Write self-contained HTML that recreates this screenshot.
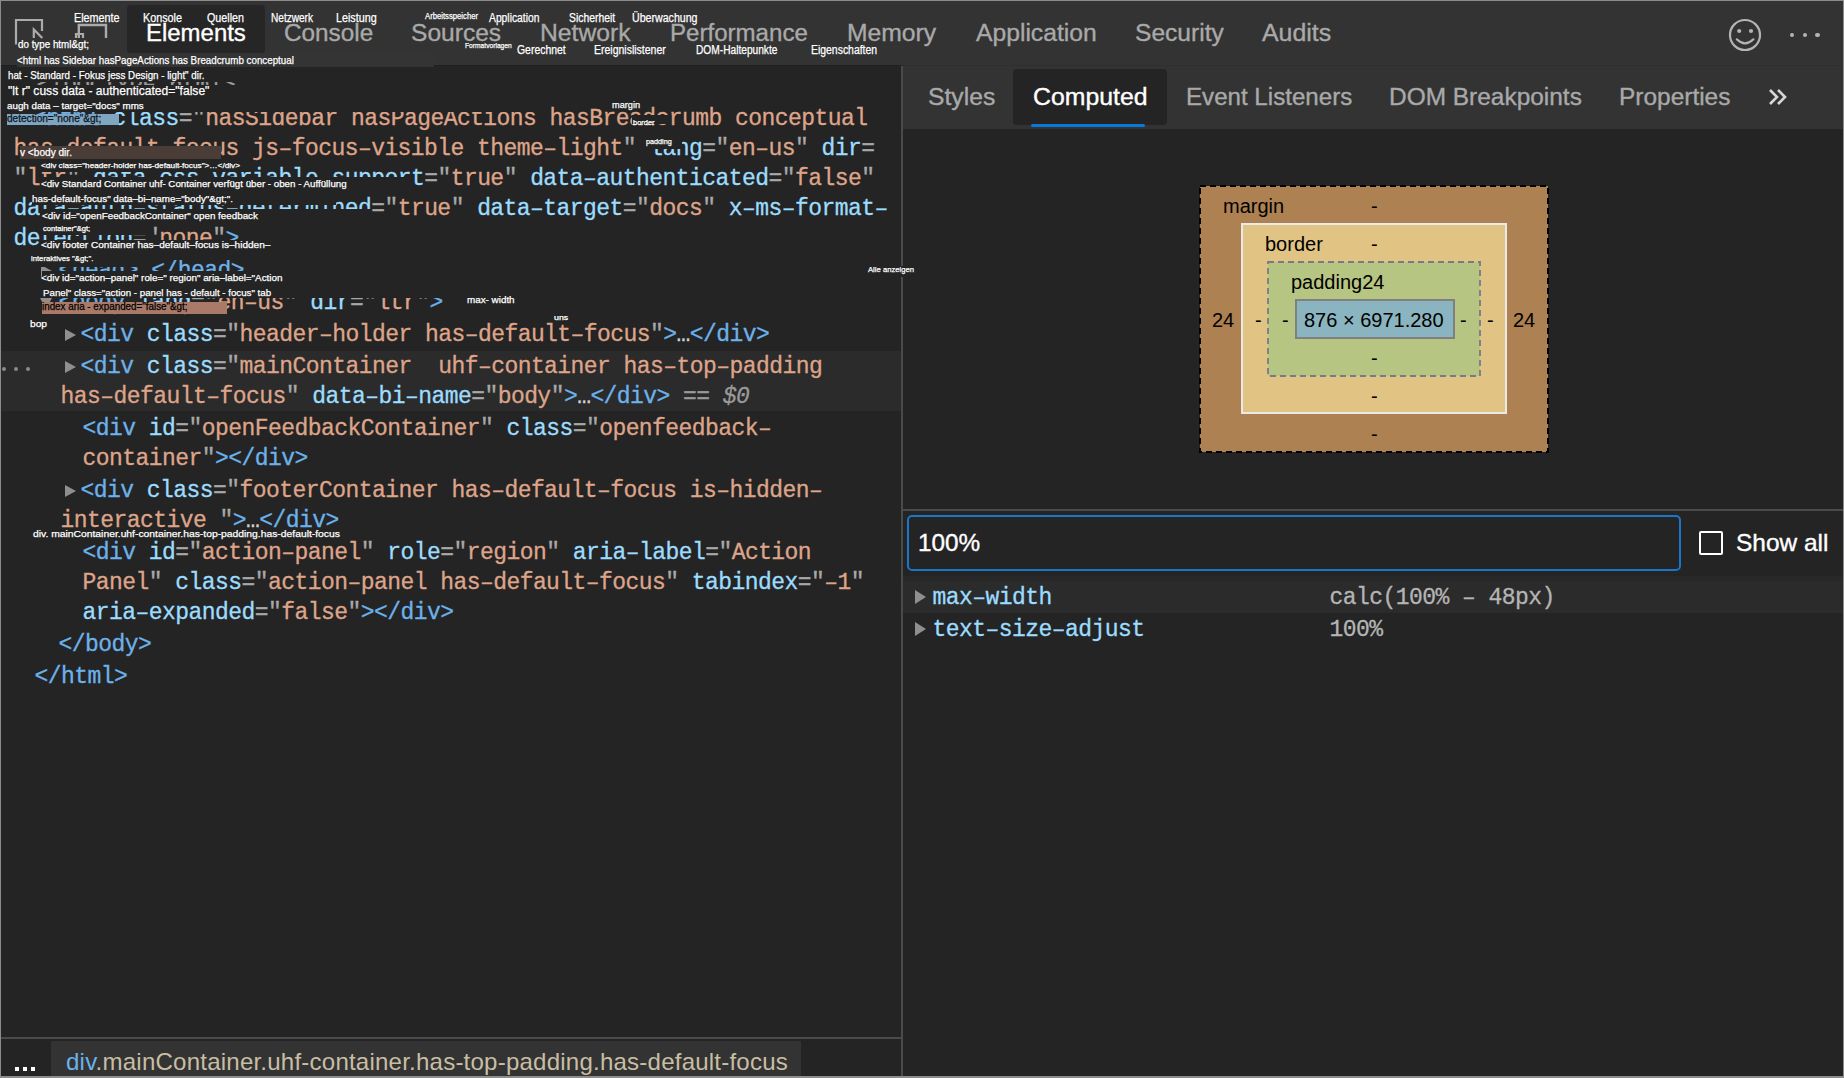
<!DOCTYPE html><html><head><meta charset="utf-8"><style>
*{margin:0;padding:0}
html,body{width:1844px;height:1078px;overflow:hidden;background:#242424}
body>div,body>svg{position:absolute}
.t{white-space:pre}
.tg{color:#6cb2ea;-webkit-text-stroke:0.3px #6cb2ea}.an{color:#9cdcfe;-webkit-text-stroke:0.3px #9cdcfe}.av{color:#dea48a;-webkit-text-stroke:0.3px #dea48a}.pu{color:#a8a8a8;-webkit-text-stroke:0.3px #a8a8a8}.tx{color:#d4d4d4;-webkit-text-stroke:0.3px #d4d4d4}.gr{color:#9a9a9a;-webkit-text-stroke:0.3px #9a9a9a}.gi{color:#9a9a9a;font-style:italic;-webkit-text-stroke:0.3px #9a9a9a}.vl{color:#b4b4b4;-webkit-text-stroke:0.3px #b4b4b4}
</style></head><body>
<div style="left:0px;top:0px;width:1844px;height:1078px;background:#242424;"></div>
<div style="left:0px;top:0px;width:1844px;height:65px;background:#333333;"></div>
<div style="left:0px;top:65px;width:901px;height:1px;background:#1f1f1f;"></div>
<div style="left:903px;top:65px;width:941px;height:64px;background:#333333;"></div>
<div style="left:903px;top:65px;width:941px;height:1px;background:#2f2f2f;"></div>
<div style="left:127px;top:5px;width:138px;height:48px;background:#262626;border-radius:4px"></div>
<div class="t" style="left:146.00px;top:21px;font:24px/24px 'Liberation Sans';color:#ffffff;-webkit-text-stroke:0.35px #ffffff;transform:scale(0.9980,1.03);transform-origin:0 20px">Elements</div>
<div class="t" style="left:283.69px;top:21px;font:24px/24px 'Liberation Sans';color:#a9a9a9;-webkit-text-stroke:0.35px #a9a9a9;transform:scale(1.0128,1.03);transform-origin:0 20px">Console</div>
<div class="t" style="left:410.98px;top:21px;font:24px/24px 'Liberation Sans';color:#a9a9a9;-webkit-text-stroke:0.35px #a9a9a9;transform:scale(1.0233,1.03);transform-origin:0 20px">Sources</div>
<div class="t" style="left:540.17px;top:21px;font:24px/24px 'Liberation Sans';color:#a9a9a9;-webkit-text-stroke:0.35px #a9a9a9;transform:scale(1.0279,1.03);transform-origin:0 20px">Network</div>
<div class="t" style="left:670.20px;top:21px;font:24px/24px 'Liberation Sans';color:#a9a9a9;-webkit-text-stroke:0.35px #a9a9a9;transform:scale(1.0030,1.03);transform-origin:0 20px">Performance</div>
<div class="t" style="left:847.37px;top:21px;font:24px/24px 'Liberation Sans';color:#a9a9a9;-webkit-text-stroke:0.35px #a9a9a9;transform:scale(1.0282,1.03);transform-origin:0 20px">Memory</div>
<div class="t" style="left:976.40px;top:21px;font:24px/24px 'Liberation Sans';color:#a9a9a9;-webkit-text-stroke:0.35px #a9a9a9;transform:scale(1.0279,1.03);transform-origin:0 20px">Application</div>
<div class="t" style="left:1134.78px;top:21px;font:24px/24px 'Liberation Sans';color:#a9a9a9;-webkit-text-stroke:0.35px #a9a9a9;transform:scale(1.0235,1.03);transform-origin:0 20px">Security</div>
<div class="t" style="left:1261.80px;top:21px;font:24px/24px 'Liberation Sans';color:#a9a9a9;-webkit-text-stroke:0.35px #a9a9a9;transform:scale(1.0369,1.03);transform-origin:0 20px">Audits</div>
<svg style="left:0px;top:0px" width="120" height="60" viewBox="0 0 120 60"><path d="M16 44.5 V20 H42 V31" fill="none" stroke="#ababab" stroke-width="2.2"/><path d="M33.8 38 V29.5 L42.3 38" fill="none" stroke="#ababab" stroke-width="2.2"/><path d="M78.8 38 V25 H106 V38" fill="none" stroke="#ababab" stroke-width="2.4"/><path d="M76 38 V34 H83 V38" fill="none" stroke="#ababab" stroke-width="2.2"/></svg>
<svg style="left:1727px;top:17px" width="36" height="36" viewBox="0 0 36 36"><circle cx="18" cy="18" r="15" fill="none" stroke="#b4b4b4" stroke-width="2.2"/><circle cx="12.2" cy="14" r="2.1" fill="#b4b4b4"/><circle cx="24" cy="14" r="2.1" fill="#b4b4b4"/><path d="M9.8 22.3 Q18 30.5 26.4 22.3" fill="none" stroke="#b4b4b4" stroke-width="2.2" stroke-linecap="round"/></svg>
<div style="left:1790.0px;top:33px;width:4.4px;height:4.4px;border-radius:2.2px;background:#b4b4b4"></div>
<div style="left:1802.7px;top:33px;width:4.4px;height:4.4px;border-radius:2.2px;background:#b4b4b4"></div>
<div style="left:1815.4px;top:33px;width:4.4px;height:4.4px;border-radius:2.2px;background:#b4b4b4"></div>
<div style="left:1013px;top:69px;width:154px;height:56px;background:#242424;border-radius:4px"></div>
<div style="left:1031px;top:124px;width:114px;height:3px;background:#0a78d6;border-radius:2px"></div>
<div class="t" style="left:927.97px;top:85px;font:24px/24px 'Liberation Sans';color:#a9a9a9;-webkit-text-stroke:0.35px #a9a9a9;transform:scale(1.0286,1.03);transform-origin:0 20px">Styles</div>
<div class="t" style="left:1032.96px;top:85px;font:24px/24px 'Liberation Sans';color:#ffffff;-webkit-text-stroke:0.35px #ffffff;transform:scale(1.0352,1.03);transform-origin:0 20px">Computed</div>
<div class="t" style="left:1186.00px;top:85px;font:24px/24px 'Liberation Sans';color:#a9a9a9;-webkit-text-stroke:0.35px #a9a9a9;transform:scale(1.0049,1.03);transform-origin:0 20px">Event Listeners</div>
<div class="t" style="left:1388.78px;top:85px;font:24px/24px 'Liberation Sans';color:#a9a9a9;-webkit-text-stroke:0.35px #a9a9a9;transform:scale(1.0182,1.03);transform-origin:0 20px">DOM Breakpoints</div>
<div class="t" style="left:1618.78px;top:85px;font:24px/24px 'Liberation Sans';color:#a9a9a9;-webkit-text-stroke:0.35px #a9a9a9;transform:scale(1.0187,1.03);transform-origin:0 20px">Properties</div>
<svg style="left:1767px;top:87px" width="22" height="20" viewBox="0 0 22 20"><path d="M3 3 L10 10 L3 17 M11 3 L18 10 L11 17" fill="none" stroke="#d8d8d8" stroke-width="2.6"/></svg>
<div style="left:901px;top:66px;width:2px;height:1012px;background:#4a4a4a;"></div>
<div style="left:1px;top:351px;width:900px;height:60px;background:#2b2b2b;"></div>
<div style="left:2px;top:367px;width:4px;height:4px;border-radius:2px;background:#8a8a8a"></div>
<div style="left:14px;top:367px;width:4px;height:4px;border-radius:2px;background:#8a8a8a"></div>
<div style="left:26px;top:367px;width:4px;height:4px;border-radius:2px;background:#8a8a8a"></div>
<div class="t" style="left:36.6px;top:76px;font:23px/23px 'Liberation Mono';letter-spacing:-0.56px;"><span class="gr">&lt;!DOCTYPE html&gt;</span></div>
<svg style="left:17px;top:114px" width="12" height="11" viewBox="0 0 12 11"><path d="M0 0 L12 0 L6 11 Z" fill="#8f8f8f"/></svg>
<div class="t" style="left:33.1px;top:108px;font:23px/23px 'Liberation Mono';letter-spacing:-0.56px;"><span class="tg">&lt;html</span><span class="tx"> </span><span class="an">class</span><span class="pu">="</span><span class="av">hasSidebar hasPageActions hasBreadcrumb conceptual</span></div>
<div class="t" style="left:13.6px;top:138px;font:23px/23px 'Liberation Mono';letter-spacing:-0.56px;"><span class="av">has–default–focus js–focus–visible theme–light</span><span class="pu">"</span><span class="tx"> </span><span class="an">lang</span><span class="pu">="</span><span class="av">en–us</span><span class="pu">"</span><span class="tx"> </span><span class="an">dir</span><span class="pu">=</span></div>
<div class="t" style="left:13.6px;top:168px;font:23px/23px 'Liberation Mono';letter-spacing:-0.56px;"><span class="pu">"</span><span class="av">ltr</span><span class="pu">"</span><span class="tx"> </span><span class="an">data–css–variable–support</span><span class="pu">="</span><span class="av">true</span><span class="pu">"</span><span class="tx"> </span><span class="an">data–authenticated</span><span class="pu">="</span><span class="av">false</span><span class="pu">"</span></div>
<div class="t" style="left:13.6px;top:198px;font:23px/23px 'Liberation Mono';letter-spacing:-0.56px;"><span class="an">data–auth–status–determined</span><span class="pu">="</span><span class="av">true</span><span class="pu">"</span><span class="tx"> </span><span class="an">data–target</span><span class="pu">="</span><span class="av">docs</span><span class="pu">"</span><span class="tx"> </span><span class="an">x–ms–format–</span></div>
<div class="t" style="left:13.6px;top:228px;font:23px/23px 'Liberation Mono';letter-spacing:-0.56px;"><span class="an">detection</span><span class="pu">="</span><span class="av">none</span><span class="pu">"</span><span class="tg">&gt;</span></div>
<svg style="left:41px;top:265px" width="11" height="12" viewBox="0 0 11 12"><path d="M0 0 L11 6 L0 12 Z" fill="#8f8f8f"/></svg>
<div class="t" style="left:58.6px;top:260px;font:23px/23px 'Liberation Mono';letter-spacing:-0.56px;"><span class="tg">&lt;head&gt;</span><span class="tx">…</span><span class="tg">&lt;/head&gt;</span></div>
<svg style="left:40px;top:298px" width="12" height="11" viewBox="0 0 12 11"><path d="M0 0 L12 0 L6 11 Z" fill="#8f8f8f"/></svg>
<div class="t" style="left:58.6px;top:292px;font:23px/23px 'Liberation Mono';letter-spacing:-0.56px;"><span class="tg">&lt;body</span><span class="tx"> </span><span class="an">lang</span><span class="pu">="</span><span class="av">en–us</span><span class="pu">"</span><span class="tx"> </span><span class="an">dir</span><span class="pu">="</span><span class="av">ltr</span><span class="pu">"</span><span class="tg">&gt;</span></div>
<svg style="left:65px;top:329px" width="11" height="12" viewBox="0 0 11 12"><path d="M0 0 L11 6 L0 12 Z" fill="#8f8f8f"/></svg>
<div class="t" style="left:80.6px;top:324px;font:23px/23px 'Liberation Mono';letter-spacing:-0.56px;"><span class="tg">&lt;div</span><span class="tx"> </span><span class="an">class</span><span class="pu">="</span><span class="av">header–holder has–default–focus</span><span class="pu">"</span><span class="tg">&gt;</span><span class="tx">…</span><span class="tg">&lt;/div&gt;</span></div>
<svg style="left:65px;top:361px" width="11" height="12" viewBox="0 0 11 12"><path d="M0 0 L11 6 L0 12 Z" fill="#8f8f8f"/></svg>
<div class="t" style="left:80.6px;top:356px;font:23px/23px 'Liberation Mono';letter-spacing:-0.56px;"><span class="tg">&lt;div</span><span class="tx"> </span><span class="an">class</span><span class="pu">="</span><span class="av">mainContainer  uhf–container has–top–padding</span></div>
<div class="t" style="left:60.6px;top:386px;font:23px/23px 'Liberation Mono';letter-spacing:-0.56px;"><span class="av">has–default–focus</span><span class="pu">"</span><span class="tx"> </span><span class="an">data–bi–name</span><span class="pu">="</span><span class="av">body</span><span class="pu">"</span><span class="tg">&gt;</span><span class="tx">…</span><span class="tg">&lt;/div&gt;</span><span class="gr"> == </span><span class="gi">$0</span></div>
<div class="t" style="left:82.6px;top:418px;font:23px/23px 'Liberation Mono';letter-spacing:-0.56px;"><span class="tg">&lt;div</span><span class="tx"> </span><span class="an">id</span><span class="pu">="</span><span class="av">openFeedbackContainer</span><span class="pu">"</span><span class="tx"> </span><span class="an">class</span><span class="pu">="</span><span class="av">openfeedback–</span></div>
<div class="t" style="left:82.6px;top:448px;font:23px/23px 'Liberation Mono';letter-spacing:-0.56px;"><span class="av">container</span><span class="pu">"</span><span class="tg">&gt;&lt;/div&gt;</span></div>
<svg style="left:65px;top:485px" width="11" height="12" viewBox="0 0 11 12"><path d="M0 0 L11 6 L0 12 Z" fill="#8f8f8f"/></svg>
<div class="t" style="left:80.6px;top:480px;font:23px/23px 'Liberation Mono';letter-spacing:-0.56px;"><span class="tg">&lt;div</span><span class="tx"> </span><span class="an">class</span><span class="pu">="</span><span class="av">footerContainer has–default–focus is–hidden–</span></div>
<div class="t" style="left:60.6px;top:510px;font:23px/23px 'Liberation Mono';letter-spacing:-0.56px;"><span class="av">interactive </span><span class="pu">"</span><span class="tg">&gt;</span><span class="tx">…</span><span class="tg">&lt;/div&gt;</span></div>
<div class="t" style="left:82.6px;top:542px;font:23px/23px 'Liberation Mono';letter-spacing:-0.56px;"><span class="tg">&lt;div</span><span class="tx"> </span><span class="an">id</span><span class="pu">="</span><span class="av">action–panel</span><span class="pu">"</span><span class="tx"> </span><span class="an">role</span><span class="pu">="</span><span class="av">region</span><span class="pu">"</span><span class="tx"> </span><span class="an">aria–label</span><span class="pu">="</span><span class="av">Action</span></div>
<div class="t" style="left:82.6px;top:572px;font:23px/23px 'Liberation Mono';letter-spacing:-0.56px;"><span class="av">Panel</span><span class="pu">"</span><span class="tx"> </span><span class="an">class</span><span class="pu">="</span><span class="av">action–panel has–default–focus</span><span class="pu">"</span><span class="tx"> </span><span class="an">tabindex</span><span class="pu">="</span><span class="av">–1</span><span class="pu">"</span></div>
<div class="t" style="left:82.6px;top:602px;font:23px/23px 'Liberation Mono';letter-spacing:-0.56px;"><span class="an">aria–expanded</span><span class="pu">="</span><span class="av">false</span><span class="pu">"</span><span class="tg">&gt;&lt;/div&gt;</span></div>
<div class="t" style="left:58.6px;top:634px;font:23px/23px 'Liberation Mono';letter-spacing:-0.56px;"><span class="tg">&lt;/body&gt;</span></div>
<div class="t" style="left:34.6px;top:666px;font:23px/23px 'Liberation Mono';letter-spacing:-0.56px;"><span class="tg">&lt;/html&gt;</span></div>
<div style="left:1px;top:1037px;width:900px;height:2px;background:#4a4a4a;"></div>
<div style="left:51px;top:1041px;width:750px;height:36px;background:#333333;"></div>
<div style="left:15px;top:1067px;width:4px;height:4px;background:#ffffff;"></div>
<div style="left:23px;top:1067px;width:4px;height:4px;background:#ffffff;"></div>
<div style="left:31px;top:1067px;width:4px;height:4px;background:#ffffff;"></div>
<div class="t" style="left:65.6px;top:1050px;font:24px/24px 'Liberation Sans';letter-spacing:0.2px;transform:scaleX(1.0033);transform-origin:0 0"><span style="color:#6cb2ea">div</span><span style="color:#c8bea4">.mainContainer.uhf-container.has-top-padding.has-default-focus</span></div>
<svg style="left:1199px;top:185px" width="350" height="268"><rect x="1" y="1" width="348" height="266" fill="#ae8152" stroke="#000" stroke-width="2" stroke-dasharray="6 4"/></svg>
<div style="left:1241px;top:223px;width:266px;height:191px;box-sizing:border-box;border:2px solid #eaeaea;background:#e1c383"></div>
<svg style="left:1267px;top:261px" width="214" height="116"><rect x="1" y="1" width="212" height="114" fill="#b7c583" stroke="#777a88" stroke-width="1.8" stroke-dasharray="6 4"/></svg>
<div style="left:1295px;top:299px;width:160px;height:40px;box-sizing:border-box;border:2px solid #808080;background:#8ab4bf"></div>
<div class="t" style="left:1223px;top:196px;font:20px/20px 'Liberation Sans';color:#000000;">margin</div>
<div class="t" style="left:1371px;top:196px;font:20px/20px 'Liberation Sans';color:#000000;">-</div>
<div class="t" style="left:1265px;top:234px;font:20px/20px 'Liberation Sans';color:#000000;">border</div>
<div class="t" style="left:1371px;top:234px;font:20px/20px 'Liberation Sans';color:#000000;">-</div>
<div class="t" style="left:1291px;top:272px;font:20px/20px 'Liberation Sans';color:#000000;">padding24</div>
<div class="t" style="left:1304px;top:310px;font:20px/20px 'Liberation Sans';color:#000000;">876 × 6971.280</div>
<div class="t" style="left:1212px;top:310px;font:20px/20px 'Liberation Sans';color:#000000;">24</div>
<div class="t" style="left:1513px;top:310px;font:20px/20px 'Liberation Sans';color:#000000;">24</div>
<div class="t" style="left:1255px;top:310px;font:20px/20px 'Liberation Sans';color:#000000;">-</div>
<div class="t" style="left:1282px;top:310px;font:20px/20px 'Liberation Sans';color:#000000;">-</div>
<div class="t" style="left:1460px;top:310px;font:20px/20px 'Liberation Sans';color:#000000;">-</div>
<div class="t" style="left:1487px;top:310px;font:20px/20px 'Liberation Sans';color:#000000;">-</div>
<div class="t" style="left:1371px;top:348px;font:20px/20px 'Liberation Sans';color:#000000;">-</div>
<div class="t" style="left:1371px;top:386px;font:20px/20px 'Liberation Sans';color:#000000;">-</div>
<div class="t" style="left:1371px;top:424px;font:20px/20px 'Liberation Sans';color:#000000;">-</div>
<div style="left:903px;top:509px;width:940px;height:2px;background:#4a4a4a;"></div>
<div style="left:907px;top:515px;width:774px;height:56px;box-sizing:border-box;border:2px solid #1a76c9;border-radius:5px;background:#242424"></div>
<div class="t" style="left:917.98px;top:531px;font:24px/24px 'Liberation Sans';color:#ffffff;-webkit-text-stroke:0.35px #ffffff;transform:scale(1.0137,1.0);transform-origin:0 20px">100%</div>
<div style="left:1699px;top:531px;width:24px;height:24px;box-sizing:border-box;border:2px solid #ffffff;border-radius:2px"></div>
<div class="t" style="left:1735.58px;top:531px;font:24px/24px 'Liberation Sans';color:#ffffff;-webkit-text-stroke:0.35px #ffffff;transform:scale(1.0182,1.0);transform-origin:0 20px">Show all</div>
<div style="left:903px;top:576px;width:940px;height:5px;background:#282828;"></div>
<div style="left:903px;top:581px;width:940px;height:32px;background:#2b2b2b;"></div>
<svg style="left:915px;top:590px" width="11" height="14" viewBox="0 0 11 14"><path d="M0 0 L11 7 L0 14 Z" fill="#8f8f8f"/></svg>
<svg style="left:915px;top:622px" width="11" height="14" viewBox="0 0 11 14"><path d="M0 0 L11 7 L0 14 Z" fill="#8f8f8f"/></svg>
<div class="t" style="left:932.6px;top:587px;font:23px/23px 'Liberation Mono';letter-spacing:-0.56px;"><span class="an">max–width</span></div>
<div class="t" style="left:1329.6px;top:587px;font:23px/23px 'Liberation Mono';letter-spacing:-0.56px;"><span class="vl">calc(100% – 48px)</span></div>
<div class="t" style="left:932.6px;top:619px;font:23px/23px 'Liberation Mono';letter-spacing:-0.56px;"><span class="an">text–size–adjust</span></div>
<div class="t" style="left:1329.6px;top:619px;font:23px/23px 'Liberation Mono';letter-spacing:-0.56px;"><span class="vl">100%</span></div>
<div style="left:150px;top:252px;width:95px;height:8px;background:#242424"></div>
<div class="t" style="left:74.1px;top:12.2px;font:12px/12px 'Liberation Sans';color:#ffffff;-webkit-text-stroke:0.25px #ffffff;transform:scaleX(0.898);transform-origin:0 0">Elemente</div>
<div class="t" style="left:142.7px;top:12.2px;font:12px/12px 'Liberation Sans';color:#ffffff;-webkit-text-stroke:0.25px #ffffff;transform:scaleX(0.899);transform-origin:0 0">Konsole</div>
<div class="t" style="left:206.7px;top:12.2px;font:12px/12px 'Liberation Sans';color:#ffffff;-webkit-text-stroke:0.25px #ffffff;transform:scaleX(0.895);transform-origin:0 0">Quellen</div>
<div class="t" style="left:270.7px;top:12.2px;font:12px/12px 'Liberation Sans';color:#ffffff;-webkit-text-stroke:0.25px #ffffff;transform:scaleX(0.840);transform-origin:0 0">Netzwerk</div>
<div class="t" style="left:335.7px;top:12.2px;font:12px/12px 'Liberation Sans';color:#ffffff;-webkit-text-stroke:0.25px #ffffff;transform:scaleX(0.897);transform-origin:0 0">Leistung</div>
<div class="t" style="left:424.5px;top:12.0px;font:8.5px/8.5px 'Liberation Sans';color:#ffffff;-webkit-text-stroke:0.25px #ffffff;transform:scaleX(0.905);transform-origin:0 0">Arbeitsspeicher</div>
<div class="t" style="left:488.7px;top:12.0px;font:12px/12px 'Liberation Sans';color:#ffffff;-webkit-text-stroke:0.25px #ffffff;transform:scaleX(0.860);transform-origin:0 0">Application</div>
<div class="t" style="left:568.6px;top:12.0px;font:12px/12px 'Liberation Sans';color:#ffffff;-webkit-text-stroke:0.25px #ffffff;transform:scaleX(0.864);transform-origin:0 0">Sicherheit</div>
<div class="t" style="left:632.0px;top:12.0px;font:12px/12px 'Liberation Sans';color:#ffffff;-webkit-text-stroke:0.25px #ffffff;transform:scaleX(0.885);transform-origin:0 0">Überwachung</div>
<div class="t" style="left:464.7px;top:42.1px;font:8px/8px 'Liberation Sans';color:#ffffff;-webkit-text-stroke:0.25px #ffffff;transform:scaleX(0.834);transform-origin:0 0">Formatvorlagen</div>
<div class="t" style="left:517.0px;top:44.0px;font:12px/12px 'Liberation Sans';color:#ffffff;-webkit-text-stroke:0.25px #ffffff;transform:scaleX(0.869);transform-origin:0 0">Gerechnet</div>
<div class="t" style="left:594.3px;top:44.0px;font:12px/12px 'Liberation Sans';color:#ffffff;-webkit-text-stroke:0.25px #ffffff;transform:scaleX(0.875);transform-origin:0 0">Ereignislistener</div>
<div class="t" style="left:696.0px;top:44.0px;font:12px/12px 'Liberation Sans';color:#ffffff;-webkit-text-stroke:0.25px #ffffff;transform:scaleX(0.848);transform-origin:0 0">DOM-Haltepunkte</div>
<div class="t" style="left:811.0px;top:44.0px;font:12px/12px 'Liberation Sans';color:#ffffff;-webkit-text-stroke:0.25px #ffffff;transform:scaleX(0.869);transform-origin:0 0">Eigenschaften</div>
<div class="t" style="left:17.9px;top:39.6px;font:10px/10px 'Liberation Sans';color:#ffffff;-webkit-text-stroke:0.25px #ffffff;transform:scaleX(0.981);transform-origin:0 0">do type html&amp;gt;</div>
<div style="left:17px;top:53px;width:417px;height:14px;background:#343434"></div>
<div class="t" style="left:17.0px;top:54.7px;font:10.5px/10.5px 'Liberation Sans';color:#ffffff;-webkit-text-stroke:0.25px #ffffff;transform:scaleX(0.931);transform-origin:0 0">&lt;html has Sidebar hasPageActions has Breadcrumb conceptual</div>
<div style="left:7px;top:67px;width:238px;height:15px;background:#242424"></div>
<div class="t" style="left:7.7px;top:69.8px;font:10.5px/10.5px 'Liberation Sans';color:#ffffff;-webkit-text-stroke:0.25px #ffffff;transform:scaleX(0.931);transform-origin:0 0">hat - Standard - Fokus jess Design - light" dir.</div>
<div style="left:7px;top:85px;width:238px;height:13px;background:#242424"></div>
<div class="t" style="left:7.7px;top:84.6px;font:12.5px/12.5px 'Liberation Sans';color:#ffffff;-webkit-text-stroke:0.25px #ffffff;transform:scaleX(0.966);transform-origin:0 0">"lt r" cuss data - authenticated="false"</div>
<div style="left:7px;top:98px;width:541px;height:14px;background:#242424"></div>
<div class="t" style="left:6.7px;top:100.5px;font:9.5px/9.5px 'Liberation Sans';color:#ffffff;-webkit-text-stroke:0.25px #ffffff;transform:scaleX(1.030);transform-origin:0 0">augh data – target="docs" mms</div>
<div style="left:7px;top:114px;width:112px;height:11px;background:#7fa5c0"></div>
<div class="t" style="left:7.2px;top:114.4px;font:10px/10px 'Liberation Sans';color:#0a1520;-webkit-text-stroke:0.25px #0a1520;transform:scaleX(1.007);transform-origin:0 0">detection="none"&amp;gt;</div>
<div style="left:20px;top:145.5px;width:201px;height:13.5px;background:#4a3c37"></div>
<div class="t" style="left:19.7px;top:147.5px;font:10px/10px 'Liberation Sans';color:#ffffff;-webkit-text-stroke:0.25px #ffffff;transform:scaleX(1.011);transform-origin:0 0">v &lt;body dir.</div>
<div style="left:40px;top:160px;width:210px;height:12px;background:#242424"></div>
<div class="t" style="left:41.2px;top:161.8px;font:8px/8px 'Liberation Sans';color:#ffffff;-webkit-text-stroke:0.25px #ffffff;transform:scaleX(1.028);transform-origin:0 0">&lt;div class="header-holder has-default-focus"&gt;…&lt;/div&gt;</div>
<div style="left:40px;top:177px;width:365px;height:14px;background:#242424"></div>
<div class="t" style="left:41.2px;top:179.0px;font:9.5px/9.5px 'Liberation Sans';color:#ffffff;-webkit-text-stroke:0.25px #ffffff;transform:scaleX(1.024);transform-origin:0 0">&lt;div Standard Container uhf- Container verfügt über - oben - Auffüllung</div>
<div style="left:32px;top:191px;width:304px;height:13.5px;background:#242424"></div>
<div class="t" style="left:32.2px;top:194.4px;font:9.5px/9.5px 'Liberation Sans';color:#ffffff;-webkit-text-stroke:0.25px #ffffff;transform:scaleX(1.031);transform-origin:0 0">has-default-focus" data–bi–name="body"&amp;gt;".</div>
<div style="left:40px;top:209px;width:332px;height:14px;background:#242424"></div>
<div class="t" style="left:41.7px;top:210.7px;font:9.5px/9.5px 'Liberation Sans';color:#ffffff;-webkit-text-stroke:0.25px #ffffff;transform:scaleX(1.033);transform-origin:0 0">&lt;div id="openFeedbackContainer" open feedback</div>
<div style="left:40px;top:223px;width:113px;height:12px;background:#242424"></div>
<div class="t" style="left:42.8px;top:225.0px;font:7px/7px 'Liberation Sans';color:#ffffff;-webkit-text-stroke:0.25px #ffffff;transform:scaleX(1.079);transform-origin:0 0">container"&amp;gt;</div>
<div style="left:40px;top:240px;width:250px;height:12px;background:#242424"></div>
<div class="t" style="left:41.2px;top:240.4px;font:9.5px/9.5px 'Liberation Sans';color:#ffffff;-webkit-text-stroke:0.25px #ffffff;transform:scaleX(1.058);transform-origin:0 0">&lt;div footer Container has–default–focus is–hidden–</div>
<div style="left:30px;top:252px;width:120px;height:15px;background:#242424"></div>
<div class="t" style="left:31.4px;top:255.2px;font:8px/8px 'Liberation Sans';color:#ffffff;-webkit-text-stroke:0.25px #ffffff;transform:scaleX(0.961);transform-origin:0 0">interaktives "&amp;gt;".</div>
<div style="left:42px;top:271px;width:248px;height:14px;background:#242424"></div>
<div class="t" style="left:41.2px;top:273.0px;font:9.5px/9.5px 'Liberation Sans';color:#ffffff;-webkit-text-stroke:0.25px #ffffff;transform:scaleX(1.037);transform-origin:0 0">&lt;div id="action–panel" role=" region" aria–label="Action</div>
<div style="left:40px;top:285px;width:405px;height:12.5px;background:#242424"></div>
<div class="t" style="left:43.1px;top:287.6px;font:9.5px/9.5px 'Liberation Sans';color:#ffffff;-webkit-text-stroke:0.25px #ffffff;transform:scaleX(1.022);transform-origin:0 0">Panel" class="action - panel has - default - focus" tab</div>
<div style="left:42px;top:302px;width:185px;height:12px;background:#a97a68"></div>
<div class="t" style="left:42.2px;top:302.3px;font:10px/10px 'Liberation Sans';color:#000000;-webkit-text-stroke:0.25px #000000;transform:scaleX(0.983);transform-origin:0 0">index aria - expanded="false"&amp;gt;</div>
<div class="t" style="left:29.7px;top:319.0px;font:9.5px/9.5px 'Liberation Sans';color:#ffffff;-webkit-text-stroke:0.25px #ffffff;transform:scaleX(1.073);transform-origin:0 0">bop</div>
<div style="left:32px;top:528px;width:309px;height:11px;background:#242424"></div>
<div class="t" style="left:32.6px;top:528.7px;font:9.5px/9.5px 'Liberation Sans';color:#ffffff;-webkit-text-stroke:0.25px #ffffff;transform:scaleX(1.087);transform-origin:0 0">div. mainContainer.uhf-container.has-top-padding.has-default-focus</div>
<div style="left:610px;top:100px;width:32px;height:9px;background:#242424"></div>
<div class="t" style="left:611.6px;top:100.8px;font:9px/9px 'Liberation Sans';color:#ffffff;-webkit-text-stroke:0.25px #ffffff;transform:scaleX(1.021);transform-origin:0 0">margin</div>
<div style="left:632px;top:114.7px;width:36px;height:9.299999999999997px;background:#242424"></div>
<div class="t" style="left:632.7px;top:119.4px;font:7.5px/7.5px 'Liberation Sans';color:#ffffff;-webkit-text-stroke:0.25px #ffffff;transform:scaleX(0.992);transform-origin:0 0">border</div>
<div style="left:645px;top:135.5px;width:37px;height:13.800000000000011px;background:#242424"></div>
<div class="t" style="left:646.1px;top:137.7px;font:7px/7px 'Liberation Sans';color:#ffffff;-webkit-text-stroke:0.25px #ffffff;transform:scaleX(1.032);transform-origin:0 0">padding</div>
<div style="left:866px;top:265.6px;width:49px;height:11.5px;background:#242424"></div>
<div class="t" style="left:867.5px;top:266.0px;font:8px/8px 'Liberation Sans';color:#ffffff;-webkit-text-stroke:0.25px #ffffff;transform:scaleX(0.958);transform-origin:0 0">Alle anzeigen</div>
<div style="left:466px;top:295px;width:50px;height:11px;background:#242424"></div>
<div class="t" style="left:466.9px;top:295.8px;font:9px/9px 'Liberation Sans';color:#ffffff;-webkit-text-stroke:0.25px #ffffff;transform:scaleX(1.094);transform-origin:0 0">max- width</div>
<div style="left:553px;top:313px;width:17px;height:8px;background:#242424"></div>
<div class="t" style="left:553.7px;top:313.5px;font:7px/7px 'Liberation Sans';color:#ffffff;-webkit-text-stroke:0.25px #ffffff;transform:scaleX(1.258);transform-origin:0 0">uns</div>
<div style="left:0px;top:0px;width:1px;height:1078px;background:#8c8c8c;"></div>
<div style="left:0px;top:0px;width:1844px;height:1px;background:#8c8c8c;"></div>
<div style="left:1843px;top:0px;width:1px;height:1078px;background:#8c8c8c;"></div>
<div style="left:0px;top:1076px;width:1844px;height:2px;background:#8c8c8c;"></div>
</body></html>
